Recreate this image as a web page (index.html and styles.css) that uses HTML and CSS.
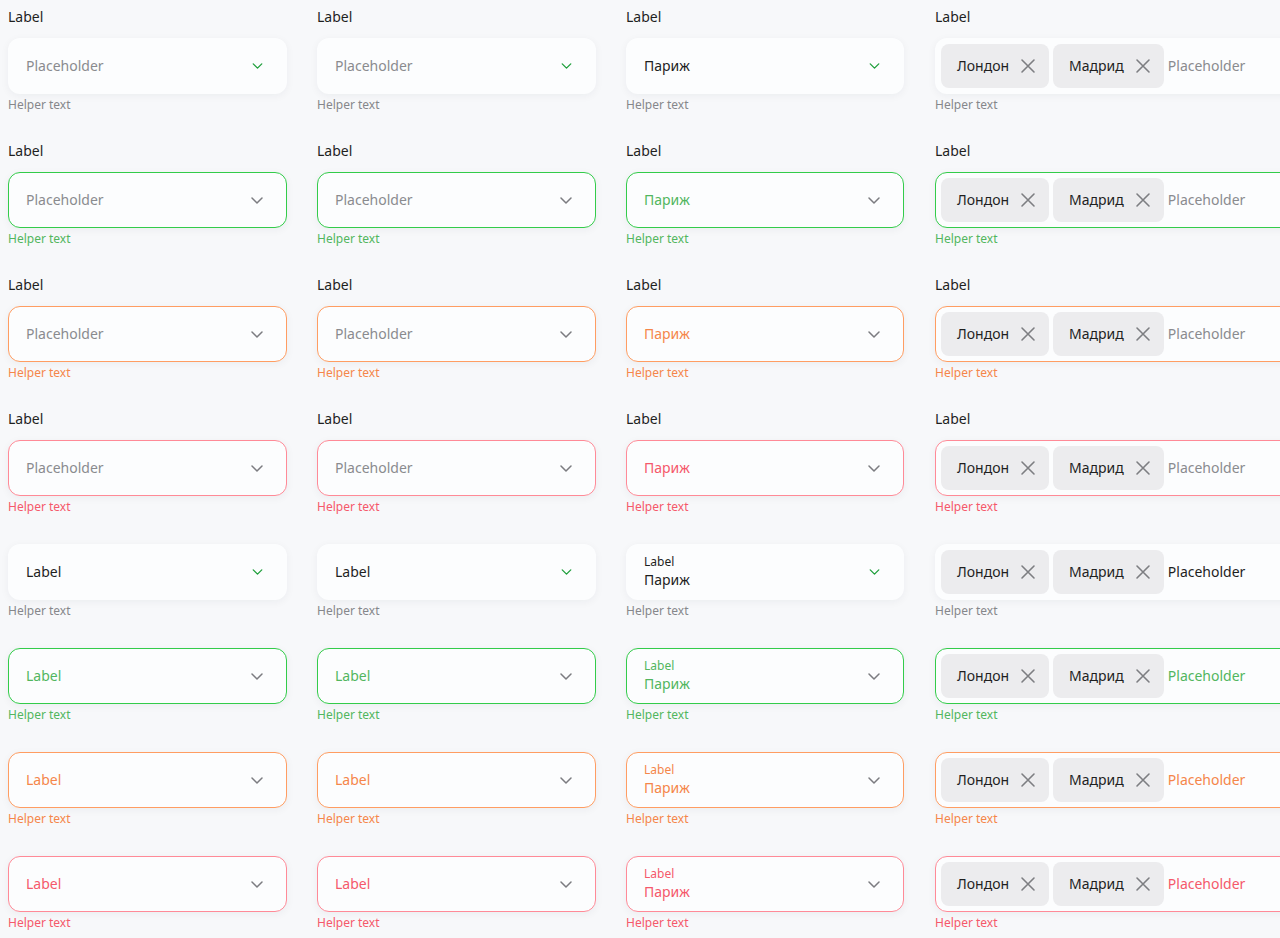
FILE: index.html
```html
<!DOCTYPE html>
<html lang="ru">
<head>
<meta charset="utf-8">
<title>Select fields</title>
<link rel="stylesheet" href="styles.css">
</head>
<body>
<svg width="0" height="0" class="defs">
  <defs>
    <symbol id="chev" viewBox="0 0 12 7"><path d="M1 1l5 5 5-5" fill="none" stroke="currentColor" stroke-width="1.5" stroke-linecap="round" stroke-linejoin="round"/></symbol>
    <symbol id="cross" viewBox="0 0 16 16"><path d="M2 2l12 12M14 2L2 14" fill="none" stroke="currentColor" stroke-width="1.6" stroke-linecap="round"/></symbol>
  </defs>
</svg>
<main class="grid">
  <!-- Row 1: default -->
  <div class="cell"><div class="label">Label</div><div class="field"><span class="text ph">Placeholder</span><svg class="chev"><use href="#chev"/></svg></div><div class="helper">Helper text</div></div>
  <div class="cell"><div class="label">Label</div><div class="field"><span class="text ph">Placeholder</span><svg class="chev"><use href="#chev"/></svg></div><div class="helper">Helper text</div></div>
  <div class="cell"><div class="label">Label</div><div class="field"><span class="text val">Париж</span><svg class="chev"><use href="#chev"/></svg></div><div class="helper">Helper text</div></div>
  <div class="cell"><div class="label">Label</div><div class="field chips"><span class="chip">Лондон<svg class="x"><use href="#cross"/></svg></span><span class="chip">Мадрид<svg class="x"><use href="#cross"/></svg></span><span class="text ph">Placeholder</span><svg class="chev"><use href="#chev"/></svg></div><div class="helper">Helper text</div></div>

  <!-- Row 2: success -->
  <div class="cell success"><div class="label">Label</div><div class="field"><span class="text ph">Placeholder</span><svg class="chev"><use href="#chev"/></svg></div><div class="helper">Helper text</div></div>
  <div class="cell success"><div class="label">Label</div><div class="field"><span class="text ph">Placeholder</span><svg class="chev"><use href="#chev"/></svg></div><div class="helper">Helper text</div></div>
  <div class="cell success"><div class="label">Label</div><div class="field"><span class="text val">Париж</span><svg class="chev"><use href="#chev"/></svg></div><div class="helper">Helper text</div></div>
  <div class="cell success"><div class="label">Label</div><div class="field chips"><span class="chip">Лондон<svg class="x"><use href="#cross"/></svg></span><span class="chip">Мадрид<svg class="x"><use href="#cross"/></svg></span><span class="text ph">Placeholder</span><svg class="chev"><use href="#chev"/></svg></div><div class="helper">Helper text</div></div>

  <!-- Row 3: warning -->
  <div class="cell warning"><div class="label">Label</div><div class="field"><span class="text ph">Placeholder</span><svg class="chev"><use href="#chev"/></svg></div><div class="helper">Helper text</div></div>
  <div class="cell warning"><div class="label">Label</div><div class="field"><span class="text ph">Placeholder</span><svg class="chev"><use href="#chev"/></svg></div><div class="helper">Helper text</div></div>
  <div class="cell warning"><div class="label">Label</div><div class="field"><span class="text val">Париж</span><svg class="chev"><use href="#chev"/></svg></div><div class="helper">Helper text</div></div>
  <div class="cell warning"><div class="label">Label</div><div class="field chips"><span class="chip">Лондон<svg class="x"><use href="#cross"/></svg></span><span class="chip">Мадрид<svg class="x"><use href="#cross"/></svg></span><span class="text ph">Placeholder</span><svg class="chev"><use href="#chev"/></svg></div><div class="helper">Helper text</div></div>

  <!-- Row 4: error -->
  <div class="cell error"><div class="label">Label</div><div class="field"><span class="text ph">Placeholder</span><svg class="chev"><use href="#chev"/></svg></div><div class="helper">Helper text</div></div>
  <div class="cell error"><div class="label">Label</div><div class="field"><span class="text ph">Placeholder</span><svg class="chev"><use href="#chev"/></svg></div><div class="helper">Helper text</div></div>
  <div class="cell error"><div class="label">Label</div><div class="field"><span class="text val">Париж</span><svg class="chev"><use href="#chev"/></svg></div><div class="helper">Helper text</div></div>
  <div class="cell error"><div class="label">Label</div><div class="field chips"><span class="chip">Лондон<svg class="x"><use href="#cross"/></svg></span><span class="chip">Мадрид<svg class="x"><use href="#cross"/></svg></span><span class="text ph">Placeholder</span><svg class="chev"><use href="#chev"/></svg></div><div class="helper">Helper text</div></div>

  <!-- Row 5: default, inline label -->
  <div class="cell"><div class="field"><span class="text val">Label</span><svg class="chev"><use href="#chev"/></svg></div><div class="helper">Helper text</div></div>
  <div class="cell"><div class="field"><span class="text val">Label</span><svg class="chev"><use href="#chev"/></svg></div><div class="helper">Helper text</div></div>
  <div class="cell"><div class="field"><span class="text stack"><span class="mini">Label</span><span class="val">Париж</span></span><svg class="chev"><use href="#chev"/></svg></div><div class="helper">Helper text</div></div>
  <div class="cell"><div class="field chips"><span class="chip">Лондон<svg class="x"><use href="#cross"/></svg></span><span class="chip">Мадрид<svg class="x"><use href="#cross"/></svg></span><span class="text val">Placeholder</span><svg class="chev"><use href="#chev"/></svg></div><div class="helper">Helper text</div></div>

  <!-- Row 6: success, inline label -->
  <div class="cell success"><div class="field"><span class="text val">Label</span><svg class="chev"><use href="#chev"/></svg></div><div class="helper">Helper text</div></div>
  <div class="cell success"><div class="field"><span class="text val">Label</span><svg class="chev"><use href="#chev"/></svg></div><div class="helper">Helper text</div></div>
  <div class="cell success"><div class="field"><span class="text stack"><span class="mini">Label</span><span class="val">Париж</span></span><svg class="chev"><use href="#chev"/></svg></div><div class="helper">Helper text</div></div>
  <div class="cell success"><div class="field chips"><span class="chip">Лондон<svg class="x"><use href="#cross"/></svg></span><span class="chip">Мадрид<svg class="x"><use href="#cross"/></svg></span><span class="text val">Placeholder</span><svg class="chev"><use href="#chev"/></svg></div><div class="helper">Helper text</div></div>

  <!-- Row 7: warning, inline label -->
  <div class="cell warning"><div class="field"><span class="text val">Label</span><svg class="chev"><use href="#chev"/></svg></div><div class="helper">Helper text</div></div>
  <div class="cell warning"><div class="field"><span class="text val">Label</span><svg class="chev"><use href="#chev"/></svg></div><div class="helper">Helper text</div></div>
  <div class="cell warning"><div class="field"><span class="text stack"><span class="mini">Label</span><span class="val">Париж</span></span><svg class="chev"><use href="#chev"/></svg></div><div class="helper">Helper text</div></div>
  <div class="cell warning"><div class="field chips"><span class="chip">Лондон<svg class="x"><use href="#cross"/></svg></span><span class="chip">Мадрид<svg class="x"><use href="#cross"/></svg></span><span class="text val">Placeholder</span><svg class="chev"><use href="#chev"/></svg></div><div class="helper">Helper text</div></div>

  <!-- Row 8: error, inline label -->
  <div class="cell error"><div class="field"><span class="text val">Label</span><svg class="chev"><use href="#chev"/></svg></div><div class="helper">Helper text</div></div>
  <div class="cell error"><div class="field"><span class="text val">Label</span><svg class="chev"><use href="#chev"/></svg></div><div class="helper">Helper text</div></div>
  <div class="cell error"><div class="field"><span class="text stack"><span class="mini">Label</span><span class="val">Париж</span></span><svg class="chev"><use href="#chev"/></svg></div><div class="helper">Helper text</div></div>
  <div class="cell error"><div class="field chips"><span class="chip">Лондон<svg class="x"><use href="#cross"/></svg></span><span class="chip">Мадрид<svg class="x"><use href="#cross"/></svg></span><span class="text val">Placeholder</span><svg class="chev"><use href="#chev"/></svg></div><div class="helper">Helper text</div></div>
</main>
</body>
</html>
```

FILE: styles.css
```css
html, body {
  margin: 0;
  padding: 0;
  overflow: hidden;
  background: #f7f8fa;
}
body {
  padding: 8px;
  font-family: "Noto Sans", "Open Sans", sans-serif;
  color: #1f1f1f;
  font-size: 14px;
}
.defs {
  position: absolute;
  width: 0;
  height: 0;
}
.grid {
  display: grid;
  grid-template-columns: 279px 279px 278px max-content;
  column-gap: 30px;
  row-gap: 30px;
  width: max-content;
}
.cell {
  display: flex;
  flex-direction: column;
  --accent-border: transparent;
  --accent-text: #1f1f1f;
  --chev: #1d9e3a;
  --chev-w: 11px;
  --chev-h: 6px;
}
.cell:nth-child(4n+4) {
  margin-left: 1px;
}
.label {
  font-size: 14px;
  line-height: 18px;
  height: 18px;
  margin-bottom: 12px;
  color: #1f1f1f;
}
.field {
  box-sizing: border-box;
  height: 56px;
  display: flex;
  align-items: center;
  padding: 0 24px 0 18px;
  border-radius: 12px;
  background: #fcfdfe;
  box-shadow: 0 2px 8px rgba(20, 30, 60, 0.05);
}
.text {
  flex: 1;
  line-height: 20px;
  white-space: nowrap;
}
.ph {
  color: #8a8b8f;
}
.val {
  color: var(--accent-text);
}
.stack {
  display: flex;
  flex-direction: column;
}
.mini {
  font-size: 12px;
  line-height: 16px;
  color: var(--accent-text);
}
.stack .val {
  font-size: 14px;
  line-height: 20px;
}
.chev {
  width: var(--chev-w);
  height: var(--chev-h);
  flex: none;
  color: var(--chev);
}
.helper {
  margin-top: 3px;
  font-size: 12px;
  line-height: 16px;
  height: 15px;
  color: var(--helper, #86878b);
}
.success, .warning, .error {
  --chev: #7b7c80;
  --chev-w: 12px;
  --chev-h: 7px;
}
.success { --accent-border: #33cc4a; --accent-text: #52b65e; --helper: #52b65e; }
.warning { --accent-border: #ff9d62; --accent-text: #f5864a; --helper: #f5864a; }
.error   { --accent-border: #ff8a97; --accent-text: #f5596b; --helper: #f5596b; }
.success .field, .warning .field, .error .field {
  border: 1px solid var(--accent-border);
  padding-left: 17px;
  padding-right: 23px;
}
.field.chips {
  padding-left: 6px;
  gap: 4px;
}
.success .field.chips, .warning .field.chips, .error .field.chips {
  padding-left: 5px;
}
.field.chips .text {
  margin-right: 60px;
}
.chip {
  display: flex;
  align-items: center;
  gap: 11px;
  height: 44px;
  box-sizing: border-box;
  padding: 0 13px 1px 16px;
  border-radius: 8px;
  background: #ececee;
  color: #1f1f1f;
  font-size: 14px;
  line-height: 20px;
  white-space: nowrap;
}
.x {
  width: 16px;
  height: 16px;
  color: #7d7e82;
  flex: none;
  margin-top: 1px;
}
```
